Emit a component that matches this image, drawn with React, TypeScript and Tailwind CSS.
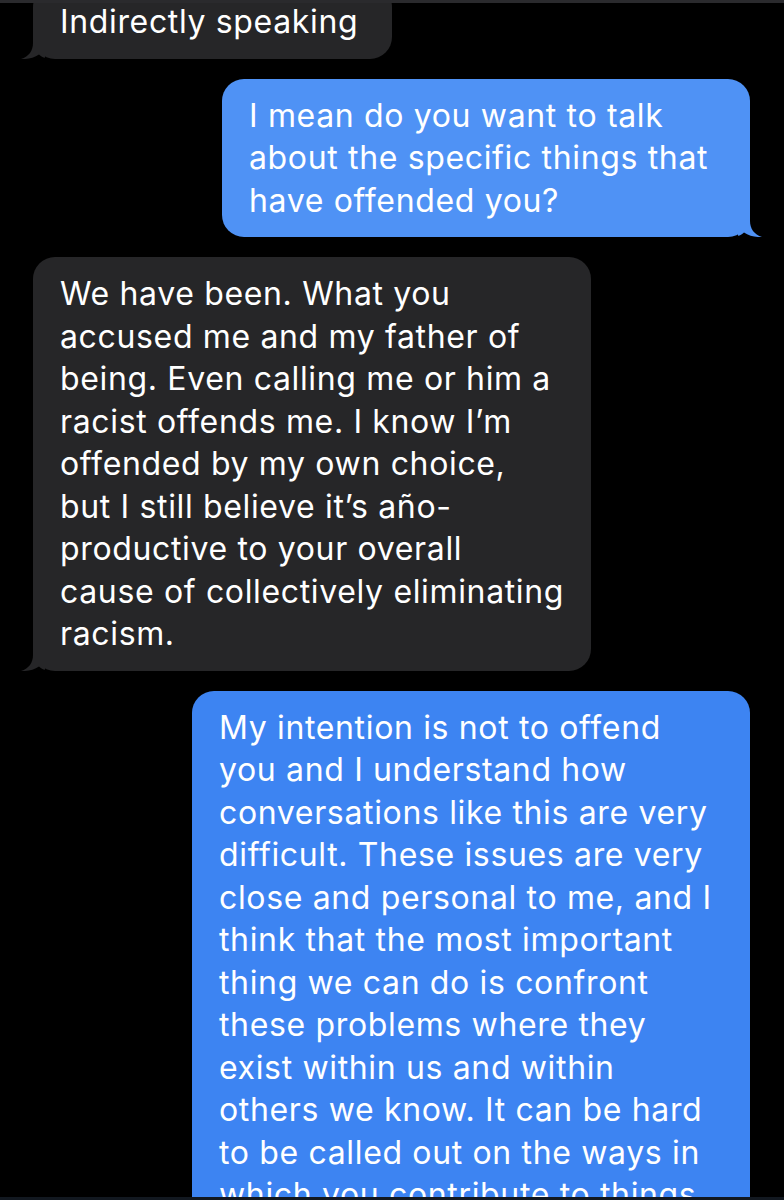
import React from 'react';

type Message = {
  from: 'me' | 'them';
  lines: string[];
  width: string;
  tail: boolean;
};

const MESSAGES: Message[] = [
  { from: 'them', lines: ['Indirectly speaking'], width: 'w-[359px]', tail: true },
  {
    from: 'me',
    lines: ['I mean do you want to talk', 'about the specific things that', 'have offended you?'],
    width: 'w-[528px]',
    tail: true,
  },
  {
    from: 'them',
    lines: [
      'We have been. What you',
      'accused me and my father of',
      'being. Even calling me or him a',
      'racist offends me. I know I’m',
      'offended by my own choice,',
      'but I still believe it’s año-',
      'productive to your overall',
      'cause of collectively eliminating',
      'racism.',
    ],
    width: 'w-[558px]',
    tail: true,
  },
  {
    from: 'me',
    lines: [
      'My intention is not to offend',
      'you and I understand how',
      'conversations like this are very',
      'difficult. These issues are very',
      'close and personal to me, and I',
      'think that the most important',
      'thing we can do is confront',
      'these problems where they',
      'exist within us and within',
      'others we know. It can be hard',
      'to be called out on the ways in',
      'which you contribute to things',
      'that hurt other people.',
    ],
    width: 'w-[558px]',
    tail: false,
  },
];

// iMessage style tail, drawn for the right side and mirrored for the left
const Tail: React.FC<{ side: 'left' | 'right'; color: string }> = ({ side, color }) => (
  <svg
    viewBox="0 0 24 24"
    className={`absolute bottom-0 w-6 h-6 ${side === 'right' ? '-right-3' : '-left-3 -scale-x-100'}`}
  >
    <path d="M0 0 L12 0 L12 8 C12 15.5 16 21.5 24 24 C18 24.4 11 23 6 19.5 C4 21.4 2 22.4 0 22.8 Z" fill={color} />
  </svg>
);

const Bubble: React.FC<{ msg: Message; first?: boolean }> = ({ msg, first }) => {
  const mine = msg.from === 'me';
  const color = mine ? (msg.tail ? '#4f92f5' : '#3d84f2') : '#262628';
  return (
    <div className={`flex ${mine ? 'justify-end pr-[34px]' : 'justify-start pl-[33px]'} ${first ? '-mt-[18px]' : ''}`}>
      <div
        className={`relative ${msg.width} rounded-[22px] pl-[27px] pr-4 pt-[16px] pb-[15px] ${
          mine ? (msg.tail ? 'bg-[#4f92f5]' : 'bg-[#3d84f2]') : 'bg-[#262628]'
        }`}
      >
        {msg.lines.map((line, i) => (
          <div key={i} className="whitespace-nowrap">
            {line}
          </div>
        ))}
        {msg.tail && <Tail side={mine ? 'right' : 'left'} color={color} />}
      </div>
    </div>
  );
};

export default function App() {
  return (
    <div className="w-[784px] h-[1200px] bg-black flex flex-col overflow-hidden">
      <div className="h-[3px] bg-[#2a2a2d] shrink-0" />
      <div
        className="flex-1 min-h-0 overflow-hidden flex flex-col gap-[20px] text-white text-[32px] leading-[42.5px] tracking-[0.65px]"
        style={{ fontFamily: 'Inter, "Noto Sans", sans-serif' }}
      >
        {MESSAGES.map((m, i) => (
          <Bubble key={i} msg={m} first={i === 0} />
        ))}
      </div>
      <div className="h-[3px] bg-[#121820] shrink-0" />
    </div>
  );
}
